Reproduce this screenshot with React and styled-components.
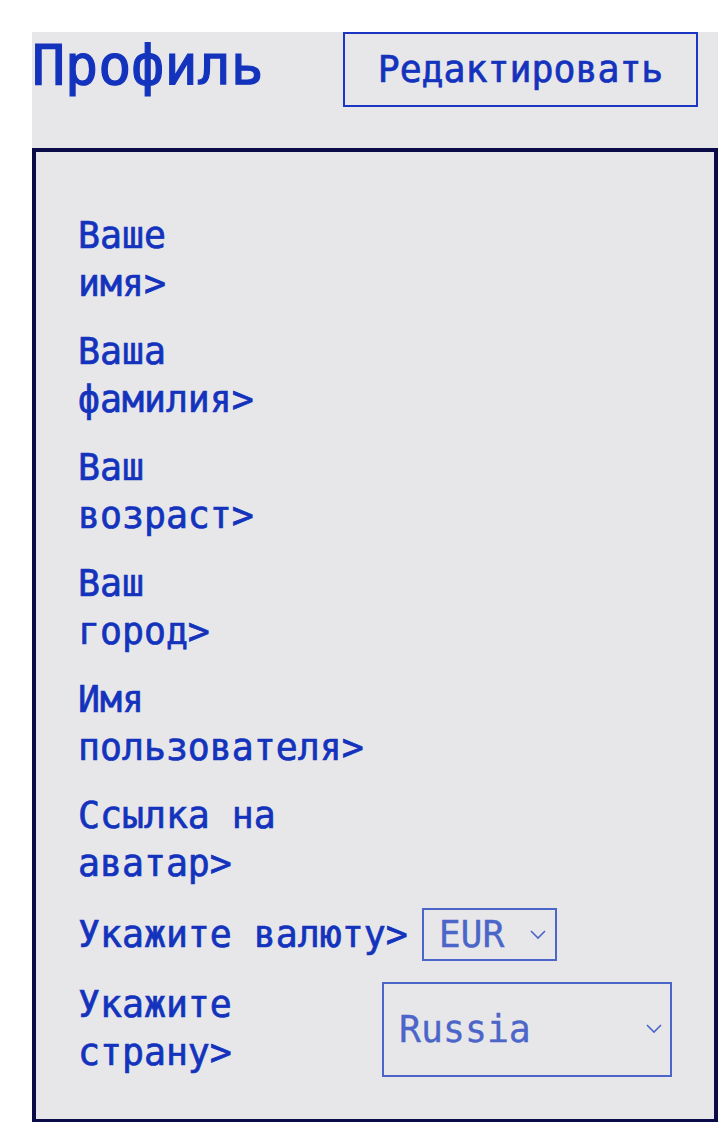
import styled, { createGlobalStyle } from "styled-components";

const GlobalStyle = createGlobalStyle`
    body {
        margin: 32px 0 0 32px;
        background: #ffffff;
        font-family: "DejaVu Sans Mono", "Liberation Mono", monospace;
        overflow: hidden;
    }
`

const Page = styled.div`
    width: 686px;
    background: #e7e7ea;
    color: #1433bd;
    -webkit-text-stroke: 0.7px currentColor;
`

const Header = styled.div`
    display: flex;
    justify-content: space-between;
    align-items: flex-start;
    height: 116px;
    padding-right: 20px;
`

const Title = styled.h1`
    margin: 2px 0 0 0;
    font-size: 55px;
    font-weight: 400;
    line-height: 62px;
    -webkit-text-stroke: 1.2px currentColor;
`

const EditButton = styled.button`
    width: 355px;
    height: 75px;
    border: 2px solid #1a36c2;
    background: transparent;
    color: #1433bd;
    font-family: inherit;
    font-size: 36.5px;
    padding: 0;
    cursor: pointer;
    -webkit-text-stroke: 0.7px currentColor;
`

const Card = styled.div`
    border: 4px solid #0b0b48;
    padding: 60px 42px 42px 42px;
    display: flex;
    flex-direction: column;
    gap: 20px;
    font-size: 36.5px;
`

const Field = styled.div`
    display: flex;
    align-items: center;
    gap: ${props => props.gap || 0}px;
`

const Label = styled.label`
    display: block;
    line-height: 48px;
    flex: 0 0 auto;
    width: ${props => props.width ? props.width + 'px' : 'auto'};
`

const SelectBox = styled.div`
    display: flex;
    align-items: center;
    justify-content: space-between;
    box-sizing: border-box;
    width: ${props => props.width}px;
    height: ${props => props.height}px;
    border: 2px solid #4b65c9;
    color: #4b65c9;
    -webkit-text-stroke: 0.3px currentColor;
    padding: 0 ${props => props.right}px 0 ${props => props.left}px;
    cursor: pointer;
`

const fields = [
    ['Ваше', 'имя>'],
    ['Ваша', 'фамилия>'],
    ['Ваш', 'возраст>'],
    ['Ваш', 'город>'],
    ['Имя', 'пользователя>'],
    ['Ссылка на', 'аватар>'],
]

function Chevron() {
    return (
        <svg width="16" height="10" viewBox="0 0 16 10">
            <path d="M1 1 L8 8 L15 1" fill="none" stroke="#4b65c9" strokeWidth="1.6" />
        </svg>
    )
}

export default function App() {
    return (
        <Page>
            <GlobalStyle />
            <Header>
                <Title>Профиль</Title>
                <EditButton>Редактировать</EditButton>
            </Header>
            <Card>
                {fields.map(lines => (
                    <Field key={lines.join(' ')}>
                        <Label>
                            {lines[0]}<br />{lines[1]}
                        </Label>
                    </Field>
                ))}
                <Field gap={14}>
                    <Label>Укажите валюту&gt;</Label>
                    <SelectBox width={135} height={53} left={15} right={9}>
                        <span>EUR</span>
                        <Chevron />
                    </SelectBox>
                </Field>
                <Field>
                    <Label width={304}>Укажите<br />страну&gt;</Label>
                    <SelectBox width={292} height={95} left={15} right={8}>
                        <span>Russia</span>
                        <Chevron />
                    </SelectBox>
                </Field>
            </Card>
        </Page>
    )
}
